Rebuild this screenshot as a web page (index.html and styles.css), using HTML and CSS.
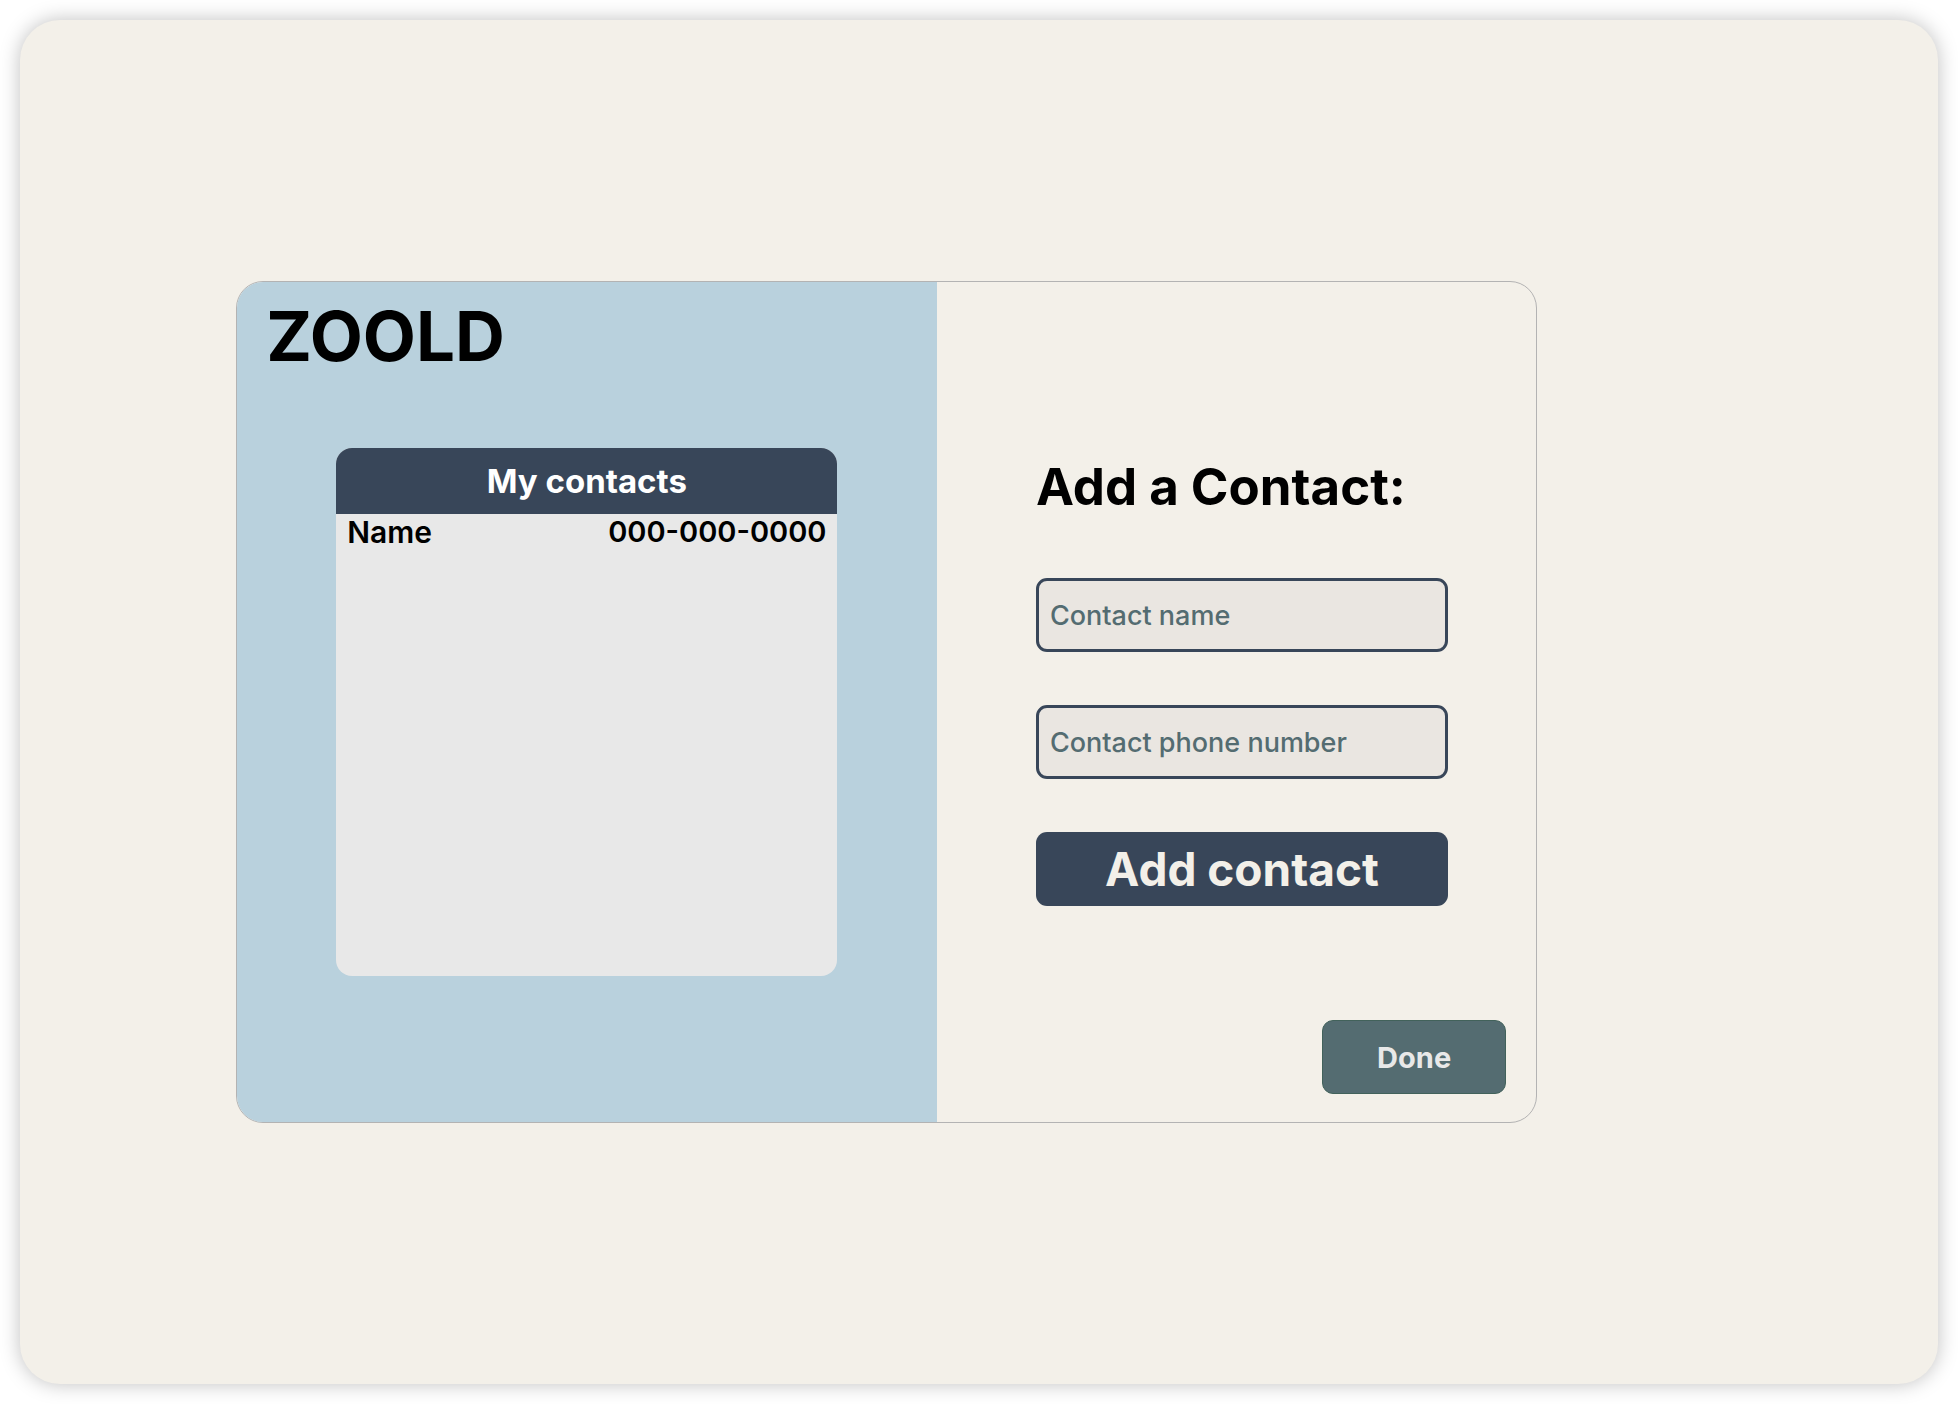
FILE: index.html
```html
<!DOCTYPE html>
<html lang="en">
<head>
<meta charset="utf-8">
<meta name="viewport" content="width=device-width, initial-scale=1">
<title>ZOOLD – Contacts</title>
<link rel="stylesheet" href="styles.css">
</head>
<body>
<main class="window">
  <div class="card">
    <section class="contacts-panel">
      <h1 class="brand">ZOOLD</h1>
      <div class="contacts">
        <h2 class="contacts-title" id="contacts-title">My contacts</h2>
        <table class="contacts-table" aria-labelledby="contacts-title">
          <tbody>
            <tr>
              <td class="contact-name">Name</td>
              <td class="contact-phone">000-000-0000</td>
            </tr>
          </tbody>
        </table>
      </div>
    </section>
    <section class="form-panel">
      <form class="contact-form">
        <h2 class="form-title">Add a Contact:</h2>
        <input class="field" type="text" name="name" placeholder="Contact name" aria-label="Contact name">
        <input class="field" type="tel" name="phone" placeholder="Contact phone number" aria-label="Contact phone number">
        <button class="add-button" type="submit">Add contact</button>
      </form>
      <button class="done-button" type="button">Done</button>
    </section>
  </div>
</main>
</body>
</html>
```
FILE: styles.css
```css
* {
  box-sizing: border-box;
}

body {
  margin: 0;
  min-height: 100vh;
  display: flex;
  padding: 20px;
  background: #fff;
  color: #000;
  font-family: Inter, "Liberation Sans", sans-serif;
}

h1,
h2 {
  margin: 0;
}

.window {
  flex: 1;
  display: flex;
  align-items: center;
  padding: 0 21% 0 11.25%;
  padding-right: 20.9%;
  border-radius: 40px;
  background: #f3f0e9;
  box-shadow: 0 0 20px rgba(0, 0, 0, 0.25);
}

.card {
  flex: 1;
  display: grid;
  grid-template-columns: 701fr 600fr;
  border: 1px solid #b3b3b3;
  border-radius: 27px;
  overflow: hidden;
}

.contacts-panel {
  padding: 22px 14.2% 146px;
  background: #b9d1dd;
}

.brand {
  margin: 0 0 80px -70px;
  font-size: 69px;
  line-height: 64px;
  font-weight: 700;
}

.contacts {
  min-height: 528px;
  border-radius: 16px;
  overflow: hidden;
  background: #e8e8e8;
}

.contacts-title {
  padding: 13px;
  background: #384659;
  color: #fff;
  font-size: 33px;
  line-height: 40px;
  font-weight: 700;
  text-align: center;
}

.contacts-table {
  width: 100%;
  border-collapse: collapse;
  font-size: 30px;
  line-height: 36px;
  font-weight: 600;
}

.contacts-table td {
  padding: 0 11px;
}

.contacts-table .contact-phone {
  font-size: 29px;
  text-align: right;
}

.form-panel {
  display: flex;
  flex-direction: column;
  justify-content: space-between;
  padding: 176px 30px 28px 99px;
}

.contact-form {
  display: flex;
  flex-direction: column;
  gap: 53px;
  margin-right: 58px;
}

.form-title {
  margin-bottom: 9px;
  font-size: 51px;
  line-height: 58px;
  font-weight: 700;
  white-space: nowrap;
}

.field {
  width: 100%;
  height: 74px;
  padding: 0 11px;
  border: 3px solid #384659;
  border-radius: 11px;
  background: #eae6e1;
  color: #546c71;
  font: 500 27px Inter, "Liberation Sans", sans-serif;
}

.field::placeholder {
  color: #546c71;
  opacity: 1;
}

.add-button {
  height: 74px;
  padding: 0;
  border: 0;
  border-radius: 11px;
  background: #384659;
  color: #f3f0e9;
  font: 700 46px Inter, "Liberation Sans", sans-serif;
}

.done-button {
  align-self: flex-end;
  width: 184px;
  height: 74px;
  border: 1px solid #42625b;
  border-radius: 11px;
  background: #546c71;
  color: #e8e8e8;
  font: 700 29px Inter, "Liberation Sans", sans-serif;
}
```
